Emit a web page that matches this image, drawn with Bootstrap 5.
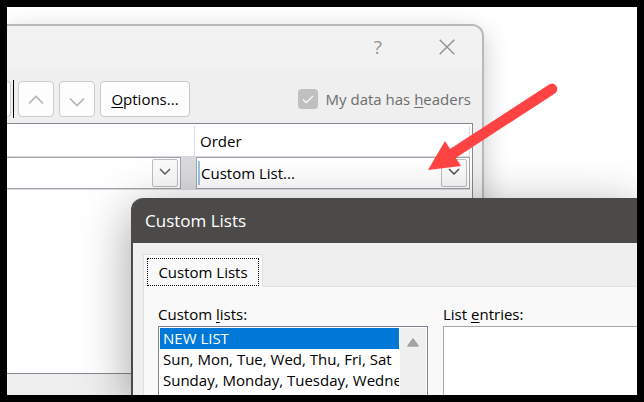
<!DOCTYPE html>
<html lang="en">
<head>
<meta charset="utf-8">
<meta name="viewport" content="width=device-width, initial-scale=1">
<title>Sort - Custom Lists</title>
<link href="https://cdn.jsdelivr.net/npm/bootstrap@5.3.0/dist/css/bootstrap.min.css" rel="stylesheet">
<style>
body{font:15px/20px "Open Sans","Noto Sans",sans-serif;color:#000}
u{text-underline-offset:2px;text-decoration-thickness:1px}
.desk{border:7px solid #000;background:#fff}
.win-sort{top:17px;left:0;right:153px;bottom:0;border:solid #b9b9b9;border-width:2px 2px 0 0;border-top-right-radius:12px;background:#efefef;box-shadow:0 8px 26px rgba(0,0,0,.22)}
.bar-sort{height:43px;padding:0 27px 2px 0;background:#f2f2f2;border-top-right-radius:10px;color:#929292}
.bar-btn{border:0;background:none;padding:0;color:#929292;line-height:20px}
.help{font-size:19px;margin-right:57px}
.tools{padding:11px 11px 5px 0}
.tool{height:36px;border:1px solid #c8c8c8;border-radius:4px;background:#fdfdfd;padding:0;color:#000}
.tool:disabled{color:#b5b5b5;border-color:#ccc}
.tool-sq{width:36px;margin-right:5px}
.tool-edge{width:4px;border-left:0;border-radius:0 4px 4px 0;margin-right:2px}
.caret-line{width:1px;height:38px;background:#000;margin-right:4px}
.tool-opt{width:90px}
.check-box{appearance:none;width:20px;height:20px;border-radius:4px;background:#c0c0c0 url("data:image/svg+xml,%3Csvg xmlns='http://www.w3.org/2000/svg' viewBox='0 0 20 20'%3E%3Cpath d='M5 10.5l3.2 3.2L15 7' fill='none' stroke='%23fff' stroke-width='1.2'/%3E%3C/svg%3E");margin:0 8px 0 0}
.headers-label{color:#6d6d6d}
.levels{border:solid #858892;border-width:1px 1px 1px 0;background:#fff;margin-right:9px;margin-bottom:21px}
.col-a{width:188px}
.level-head{height:32px;padding-top:2px}
.level-head .col-a{border-right:1px solid #dedede}
.level-head .col-b{border-right:1px solid #dedede;margin-right:2px;padding:5px 5px}
.level-row{height:34px;background:#dadade;padding:1px 0;margin-right:2px}
.combo{height:32px;border:1px solid #a2a2aa;background:#fff;padding:1px 2px 1px 1px}
.combo-a{width:174px;border-left:0;margin-right:15px}
.combo select{appearance:none;border:0;background:none;color:#000;padding:0 0 0 3px;min-width:0}
.combo-b select{border-left:2px solid #98c4ec;padding-left:1px;margin:2px 0}
.drop{width:26px;height:28px;border:1px solid #bdbdbd;border-radius:2px;background:#fafafa}
.drop svg{margin-bottom:2px}
.win-lists{top:191px;left:124px;right:0;bottom:0;border-left:2px solid #4b4a48;border-top-left-radius:12px;background:#efefef;box-shadow:0 12px 50px rgba(0,0,0,.38)}
.bar-lists{height:45px;background:#4b4a48;color:#fff;border-top-left-radius:10px;padding-left:12px;font-size:17px}
.tab-area{padding:11px 0 0 10px}
.tab-one{border:1px solid #e0e0e0;border-bottom:0;background:#f9f9f9;padding:3px 4px 1px 3px;width:120px}
.tab-fill{border-bottom:1px solid #e0e0e0}
.tab-btn{height:28px;width:112px;border:1px dotted #000;background:none;padding:0;color:#000}
.pane{border-left:1px solid #e0e0e0;background:#f9f9f9;padding:17px 0 0 14px;gap:15px}
.list-col{width:270px}
.field-label{height:22px}
.list-box{border:1px solid #7e828e;border-bottom:0;background:#fff;padding:1px 1px 0}
.entries{border:1px solid #a8a8a8;border-width:1px 0 0 1px;background:#fff;resize:none}
.item{height:21px;line-height:21px;padding-left:3px;border:0;background:none;color:#000;white-space:nowrap;overflow:hidden}
.item-on{background:#0078d7;color:#fff}
.scroll-bar{width:26px;background:#efefef;margin-left:1px;padding-top:10px}
.arrow{left:413px;top:70px;pointer-events:none}
</style>
<script src="https://cdn.jsdelivr.net/npm/bootstrap@5.3.0/dist/js/bootstrap.bundle.min.js"></script>
</head>
<body>
<main class="desk vh-100 position-relative overflow-hidden">
  <section class="win-sort position-absolute d-flex flex-column" aria-label="Sort">
    <div class="bar-sort d-flex justify-content-end align-items-center flex-shrink-0">
      <button class="bar-btn help" aria-label="Help">?</button>
      <button class="bar-btn d-flex" aria-label="Close"><svg width="16" height="16" viewBox="0 0 16 16"><path d="M.7.7l14.6 14.6M15.3.7L.7 15.3" stroke="currentColor" stroke-width="1.4"/></svg></button>
    </div>
    <div class="tools d-flex align-items-center">
      <button class="tool tool-edge" aria-label="Copy level" disabled></button>
      <div class="caret-line"></div>
      <button class="tool tool-sq" aria-label="Move up" disabled><svg width="16" height="16" viewBox="0 0 16 16"><path d="M1 10.5l7-7 7 7" fill="none" stroke="currentColor" stroke-width="1.7"/></svg></button>
      <button class="tool tool-sq" aria-label="Move down" disabled><svg width="16" height="16" viewBox="0 0 16 16"><path d="M1 5.5l7 7 7-7" fill="none" stroke="currentColor" stroke-width="1.7"/></svg></button>
      <button class="tool tool-opt"><u>O</u>ptions...</button>
      <div class="d-flex align-items-center ms-auto">
        <input class="check-box" type="checkbox" id="hdr" checked disabled>
        <label class="headers-label" for="hdr">My data has <u>h</u>eaders</label>
      </div>
    </div>
    <div class="levels flex-grow-1">
      <div class="level-head d-flex">
        <div class="col-a"></div>
        <label class="col-b flex-grow-1" for="order">Order</label>
      </div>
      <div class="level-row d-flex">
        <div class="combo combo-a d-flex">
          <select class="flex-grow-1" aria-label="Sort on"><option></option></select>
          <span class="drop d-flex align-items-center justify-content-center"><svg width="12" height="8" viewBox="0 0 12 8"><path d="M1 1l5 5 5-5" fill="none" stroke="#555" stroke-width="1.4"/></svg></span>
        </div>
        <div class="combo combo-b d-flex flex-grow-1">
          <select class="flex-grow-1" id="order"><option>Custom List...</option></select>
          <span class="drop d-flex align-items-center justify-content-center"><svg width="12" height="8" viewBox="0 0 12 8"><path d="M1 1l5 5 5-5" fill="none" stroke="#444" stroke-width="1.4"/></svg></span>
        </div>
      </div>
    </div>
  </section>

  <section class="win-lists position-absolute d-flex flex-column" aria-label="Custom Lists">
    <div class="bar-lists d-flex align-items-center flex-shrink-0">Custom Lists</div>
    <div class="tab-area d-flex flex-column flex-grow-1">
      <div class="d-flex" role="tablist">
        <div class="tab-one"><button class="tab-btn" role="tab" aria-selected="true">Custom Lists</button></div>
        <div class="tab-fill flex-grow-1"></div>
      </div>
      <div class="pane d-flex flex-grow-1">
        <div class="list-col d-flex flex-column flex-shrink-0">
          <div class="field-label" id="ll">Custom <u>l</u>ists:</div>
          <div class="list-box d-flex flex-grow-1">
            <div class="list-group rounded-0 flex-grow-1 overflow-hidden" role="listbox" aria-labelledby="ll">
              <div class="item item-on" role="option" aria-selected="true">NEW LIST</div>
              <div class="item" role="option">Sun, Mon, Tue, Wed, Thu, Fri, Sat</div>
              <div class="item" role="option">Sunday, Monday, Tuesday, Wednesday</div>
            </div>
            <div class="scroll-bar d-flex justify-content-center align-items-start flex-shrink-0"><svg width="12" height="9" viewBox="0 0 12 9"><path d="M6 1L11 8H1z" fill="#a3a3a3" stroke="#a3a3a3" stroke-width="1.5" stroke-linejoin="round"/></svg></div>
          </div>
        </div>
        <div class="d-flex flex-column flex-grow-1">
          <label class="field-label" for="entries">List <u>e</u>ntries:</label>
          <textarea class="entries flex-grow-1 rounded-0" id="entries"></textarea>
        </div>
      </div>
    </div>
  </section>

  <svg class="arrow position-absolute" width="140" height="104" viewBox="420 77 140 104" aria-hidden="true"><path d="M552 89L449 156" stroke="#ff4343" stroke-width="10.5" stroke-linecap="round"/><path d="M428 170L445 141L461 166z" fill="#ff4343"/></svg>
</main>
</body>
</html>
